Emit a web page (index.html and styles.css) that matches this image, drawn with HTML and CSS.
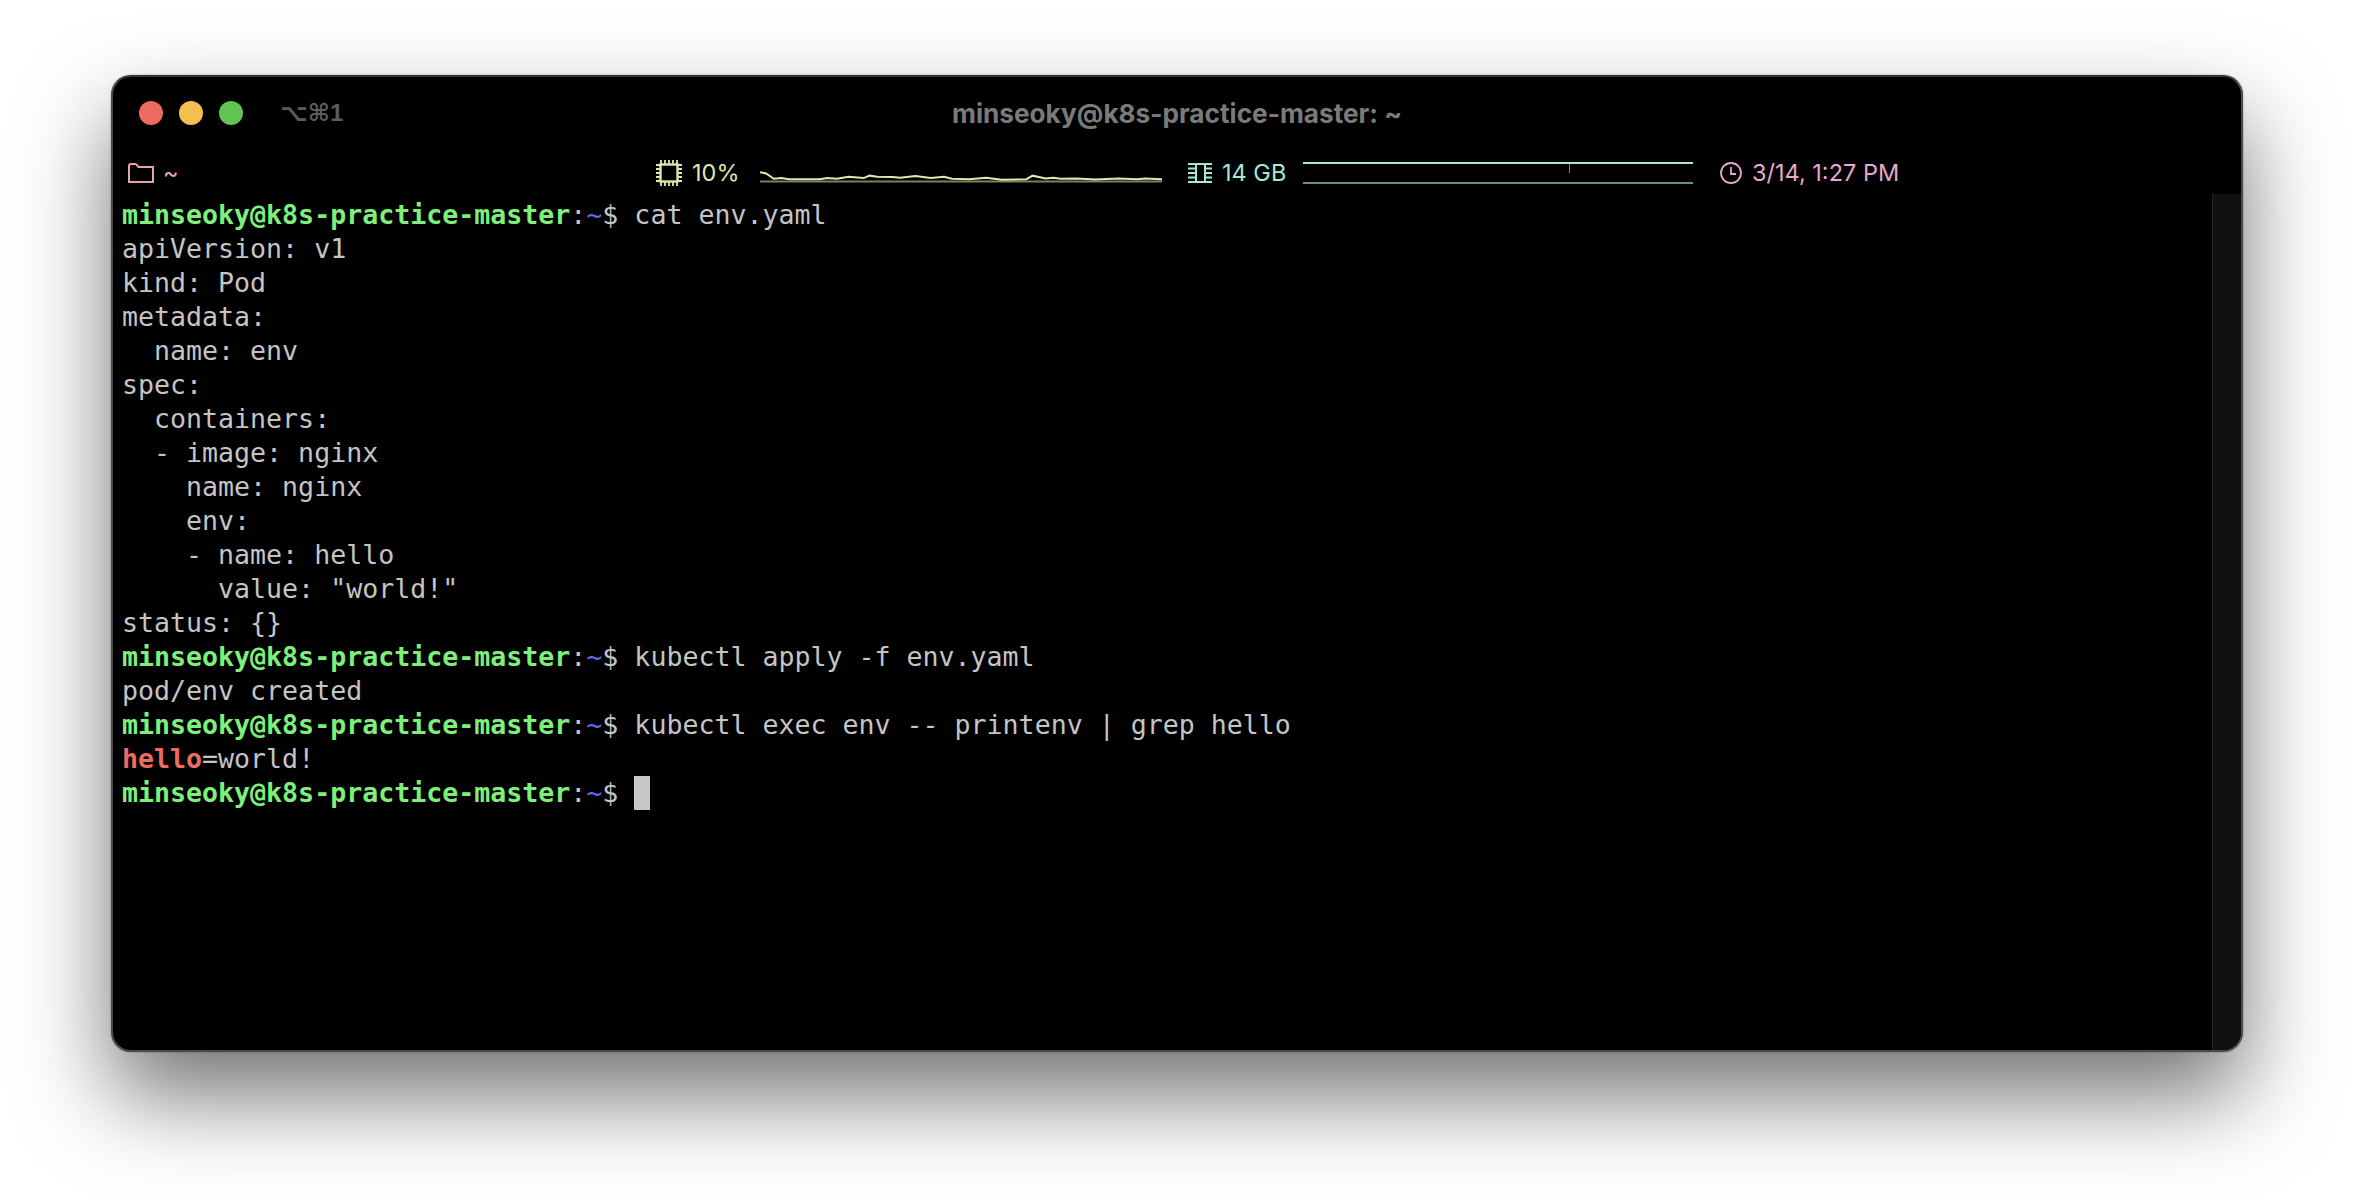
FILE: index.html
```html
<!DOCTYPE html>
<html lang="en">
<head>
<meta charset="utf-8">
<title>minseoky@k8s-practice-master: ~</title>
<link rel="stylesheet" href="styles.css">
</head>
<body>
<main class="window">
  <header class="titlebar">
    <div class="lights"><span class="light red"></span><span class="light yellow"></span><span class="light green"></span></div>
    <span class="shortcut">⌥⌘1</span>
    <span class="title">minseoky@k8s-practice-master: ~</span>
  </header>
  <div class="status">
    <div class="seg seg-dir">
      <svg class="icon" width="26" height="20" viewBox="0 0 26 20" fill="none" stroke="currentColor" stroke-width="2"><path d="M1 19V3a2 2 0 0 1 2-2h4a2 2 0 0 1 1.500.700L10.500 4H25v15z"/></svg>
      <span>~</span>
    </div>
    <div class="seg seg-cpu">
      <svg class="icon" width="26" height="26" viewBox="0 0 26 26" fill="none" stroke="currentColor"><rect x="4.500" y="4.500" width="17" height="17" stroke-width="2.400"/><path stroke-width="1.800" d="M5 0v4M9 0v4M13 0v4M17 0v4M21 0v4M5 22v4M9 22v4M13 22v4M17 22v4M21 22v4M0 5h4M0 9h4M0 13h4M0 17h4M0 21h4M22 5h4M22 9h4M22 13h4M22 17h4M22 21h4"/></svg>
      <span class="val">10%</span>
      <svg class="spark" width="402" height="14" viewBox="314 95 1050 40" preserveAspectRatio="none" fill="none">
        <path class="spark-base" vector-effect="non-scaling-stroke" d="M314 131H1364"/>
        <path class="spark-line" vector-effect="non-scaling-stroke" d="M314 104L330 108L350 123L370 121L390 124L430 124L470 124L490 121L515 123L545 117L585 121L600 114L620 117L660 118L680 120L720 115L760 121L795 117L815 123L860 124L905 120L945 126L1010 124L1026 114L1060 122L1080 120L1100 123L1140 122L1190 125L1250 122L1300 124L1320 122L1364 124"/>
      </svg>
    </div>
    <div class="seg seg-mem">
      <svg class="icon" width="24" height="20" viewBox="0 0 24 20" fill="none" stroke="currentColor" stroke-width="2"><path d="M0 1h24M0 19h24M8 1v18M17 1v18M0 5.500h8M0 10h8M0 14.500h8M17 5.500h7M17 10h7M17 14.500h7"/></svg>
      <span class="val">14 GB</span>
      <svg class="mem-graph" width="390" height="22" viewBox="0 0 390 22" fill="none">
        <path class="mem-top" d="M0 1H390"/><path class="mem-bottom" d="M0 21H390"/><path class="mem-tick" d="M266.500 2V11"/>
      </svg>
    </div>
    <div class="seg seg-time">
      <svg class="icon" width="22" height="22" viewBox="0 0 22 22" fill="none" stroke="currentColor" stroke-width="1.800"><circle cx="11" cy="11" r="10"/><path d="M11 5v7h5"/></svg>
      <span class="val">3/14, 1:27 PM</span>
    </div>
  </div>
  <div class="body">
    <pre class="term"><span class="u">minseoky@k8s-practice-master</span>:<span class="p">~</span>$ cat env.yaml
apiVersion: v1
kind: Pod
metadata:
  name: env
spec:
  containers:
  - image: nginx
    name: nginx
    env:
    - name: hello
      value: "world!"
status: {}
<span class="u">minseoky@k8s-practice-master</span>:<span class="p">~</span>$ kubectl apply -f env.yaml
pod/env created
<span class="u">minseoky@k8s-practice-master</span>:<span class="p">~</span>$ kubectl exec env -- printenv | grep hello
<span class="m">hello</span>=world!
<span class="u">minseoky@k8s-practice-master</span>:<span class="p">~</span>$ <span class="cursor"> </span></pre>
    <div class="scrollbar"></div>
  </div>
</main>
</body>
</html>
```
FILE: styles.css
```css
* { box-sizing: border-box; }
html, body { margin: 0; height: 100%; background: #fff; overflow: hidden; }
body { padding: 75px 111px 148px 111px; }
.window {
  height: 977px;
  background: #000;
  border: 2px solid #4a4a4a;
  border-top-color: #333;
  border-radius: 20px;
  box-shadow: 0 44px 90px rgba(0,0,0,.55), 0 0 2px rgba(0,0,0,.4);
  display: flex;
  flex-direction: column;
  overflow: hidden;
}
.titlebar {
  height: 72px;
  flex: none;
  display: flex;
  align-items: center;
  position: relative;
  padding: 0 0 0 26px;
}
.lights { display: flex; gap: 16px; }
.light { width: 24px; height: 24px; border-radius: 50%; }
.red { background: #ed6a5e; }
.yellow { background: #f4bf4f; }
.green { background: #61c554; }
.shortcut {
  margin-left: 37px;
  color: #5c5c5c;
  font: 700 24px "Liberation Sans", "DejaVu Sans", sans-serif;
}
.title {
  position: absolute;
  left: 0; right: 0;
  top: 0; bottom: 0;
  display: flex;
  align-items: center;
  justify-content: center;
  color: #7a7a7a;
  font: 700 26.200px "Inter", "Liberation Sans", sans-serif;
}
.status {
  height: 45px;
  flex: none;
  display: flex;
  align-items: center;
  font: 400 23.500px "Inter", "Liberation Sans", sans-serif;
  padding-left: 15px;
  padding-top: 2px;
}
.seg { display: flex; align-items: center; flex: none; }
.icon { flex: none; }
.seg-dir { color: #e3a5a5; width: 528px; gap: 9px; }
.seg-cpu { color: #dbe8ab; width: 532px; gap: 10px; }
.seg-cpu .spark { margin-left: 11px; margin-top: 6px; }
.seg-mem { color: #a9e6d6; width: 532px; gap: 10px; }
.seg-mem .mem-graph { margin-left: 6.500px; margin-top: 1px; }
.seg-time { color: #e5a8cf; gap: 10px; }
.spark-base { stroke: #7a8060; stroke-width: 2; }
.spark-line { stroke: #dde9ae; stroke-width: 2; }
.mem-top { stroke: #a9e6d6; stroke-width: 2; }
.mem-bottom { stroke: #6f8a82; stroke-width: 2; }
.mem-tick { stroke: #6f8a82; stroke-width: 1; }
.body { flex: 1; display: flex; min-height: 0; }
.term {
  flex: 1;
  margin: 0;
  padding: 3.500px 0 0 9px;
  color: #c4c4c4;
  font: 400 26.600px/34px "DejaVu Sans Mono", monospace;
}
.u { color: #7ef07a; font-weight: 700; }
.p { color: #6a6af0; }
.m { color: #ee6b64; font-weight: 700; }
.cursor { display: inline-block; width: 16px; height: 34px; background: #c7c7c7; vertical-align: top; }
.scrollbar { width: 29px; flex: none; background: #101010; border-left: 1px solid #252525; }
```
